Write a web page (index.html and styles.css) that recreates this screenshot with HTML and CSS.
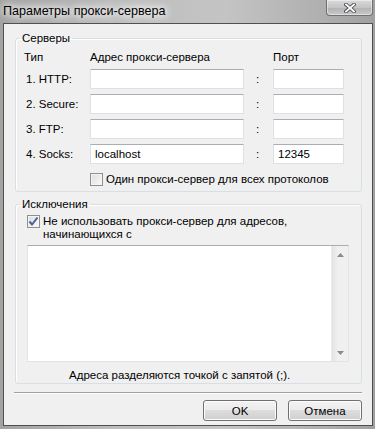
FILE: index.html
```html
<!DOCTYPE html>
<html lang="ru">
<head>
    <meta charset="UTF-8">
    <title>Параметры прокси-сервера</title>
    <link rel="stylesheet" href="styles.css">
</head>
<body>
    <div class="window">
        <div class="titlebar">
            <span class="title">Параметры прокси-сервера</span>
            <div class="close">
                <svg width="12" height="10" viewBox="0 0 12 10">
                    <path d="M2 1.5 L10 8.5 M10 1.5 L2 8.5" stroke="#4a4a56" stroke-width="3.6" stroke-linecap="square"/>
                    <path d="M2 1.5 L10 8.5 M10 1.5 L2 8.5" stroke="#fff" stroke-width="1.8" stroke-linecap="square"/>
                </svg>
            </div>
        </div>
        <div class="client">
            <fieldset class="group servers">
                <legend>Серверы</legend>
                <div class="group-body">
                    <div class="server-grid">
                        <span class="head">Тип</span>
                        <span class="head">Адрес прокси-сервера</span>
                        <span></span>
                        <span class="head">Порт</span>

                        <span class="row-label">1. HTTP:</span>
                        <div class="field"></div>
                        <span class="colon">:</span>
                        <div class="field"></div>

                        <span class="row-label">2. Secure:</span>
                        <div class="field"></div>
                        <span class="colon">:</span>
                        <div class="field"></div>

                        <span class="row-label">3. FTP:</span>
                        <div class="field"></div>
                        <span class="colon">:</span>
                        <div class="field"></div>

                        <span class="row-label">4. Socks:</span>
                        <div class="field">localhost</div>
                        <span class="colon">:</span>
                        <div class="field">12345</div>
                    </div>
                    <div class="check-row same-proxy">
                        <span class="checkbox"></span>
                        <span class="check-text">Один прокси-сервер для всех протоколов</span>
                    </div>
                </div>
            </fieldset>

            <fieldset class="group exceptions">
                <legend>Исключения</legend>
                <div class="group-body">
                    <div class="check-row">
                        <span class="checkbox">
                            <svg width="11" height="11" viewBox="0 0 11 11">
                                <path d="M1.5 5.5 L4 8.5 L9.5 1.5" fill="none" stroke="#4a5f97" stroke-width="2"/>
                            </svg>
                        </span>
                        <span class="check-text">Не использовать прокси-сервер для адресов,<br>начинающихся с</span>
                    </div>
                    <div class="textarea">
                        <div class="text-body"></div>
                        <div class="scrollbar">
                            <svg width="7" height="4" viewBox="0 0 7 4"><polygon points="0,4 3.5,0 7,4" fill="#8a8a8a"/></svg>
                            <svg width="7" height="4" viewBox="0 0 7 4"><polygon points="0,0 3.5,4 7,0" fill="#8a8a8a"/></svg>
                        </div>
                    </div>
                    <p class="hint">Адреса разделяются точкой с запятой (;).</p>
                </div>
            </fieldset>

            <div class="separator"></div>

            <div class="buttons">
                <button>OK</button>
                <button>Отмена</button>
            </div>
        </div>
    </div>
</body>
</html>
```

FILE: styles.css
```css
* {
    box-sizing: border-box;
}
body {
    margin: 0;
    background: #9c9c9c;
    font-family: "Liberation Sans", Arial, sans-serif;
    font-size: 11.5px;
    line-height: 13px;
    color: #000;
}
.window {
    width: 375px;
    height: 429px;
    display: flex;
    flex-direction: column;
    padding: 0 2px 3px 3px;
    background: linear-gradient(90deg, #a2a2a2, #bdbdbd 30%, #c4c4c4 60%, #b0b0b0 85%, #a0a0a0);
}
.titlebar {
    height: 23px;
    display: flex;
    justify-content: space-between;
    align-items: flex-start;
}
.title {
    padding-top: 4px;
    font-size: 12.6px;
    line-height: 15px;
    text-shadow: 0 0 6px #fff, 0 0 10px #fff, 0 0 12px #f4f4f4;
}
.close {
    width: 47px;
    height: 16px;
    border: 1px solid #707070;
    border-top: none;
    border-radius: 0 0 4px 4px;
    background: linear-gradient(#dadada, #c4c4c4 50%, #b2b2b2 52%, #c8c8c8);
    box-shadow: inset 0 0 0 1px rgba(255, 255, 255, 0.45);
    display: flex;
    align-items: center;
    justify-content: center;
}
.client {
    flex: 1;
    display: flex;
    flex-direction: column;
    background: #f0f0f0;
    border: 1px solid #505050;
    padding: 0 10px 0 11px;
}
.group {
    margin: 0;
    padding: 0;
    min-width: 0;
    border: 1px solid #d5dfe5;
    border-radius: 3px;
    box-shadow: inset 1px 1px 0 #fff;
}
.group legend {
    margin-left: 4px;
    padding: 0 2px;
    line-height: 13px;
}
.servers {
    margin-top: 8px;
}
.servers .group-body {
    padding: 6px 8px 5px 8px;
}
.server-grid {
    display: grid;
    grid-template-columns: 66px 154px 29px 71px;
    grid-template-rows: 13px repeat(4, 20px);
    row-gap: 5px;
    align-items: center;
}
.row-label {
    padding-left: 2px;
}
.field {
    height: 20px;
    background: #fff;
    border: 1px solid #dde1e7;
    border-top-color: #abadb3;
    padding: 3px 0 0 4px;
}
.colon {
    padding-left: 12px;
}
.check-row {
    display: flex;
    align-items: flex-start;
}
.same-proxy {
    margin: 9px -8px 0 66px;
    white-space: nowrap;
    overflow: hidden;
}
.checkbox {
    width: 13px;
    height: 13px;
    flex-shrink: 0;
    border: 1px solid #8e8f8f;
    background: linear-gradient(135deg, #dcdcdc, #fafafa);
    box-shadow: inset 0 0 0 1px #f4f4f4;
    display: flex;
    align-items: center;
    justify-content: center;
}
.check-text {
    margin-left: 3px;
}
.exceptions {
    margin-top: 6px;
}
.exceptions .group-body {
    padding: 4px 12px 1px 11px;
}
.textarea {
    margin-top: 4px;
    height: 117px;
    display: flex;
    background: #fff;
    border: 1px solid #e2e3ea;
    border-top-color: #abadb3;
}
.text-body {
    flex: 1;
}
.scrollbar {
    width: 17px;
    display: flex;
    flex-direction: column;
    justify-content: space-between;
    align-items: center;
    padding: 7px 0 6px;
    background: linear-gradient(90deg, #e4e4e4, #f0f0f0 40%, #f0f0f0);
    border-left: 1px solid #eaeaea;
}
.hint {
    margin: 7px 0 0;
    padding-left: 42px;
}
.separator {
    margin: 8px 0 0 -1px;
    border-top: 1px solid #a0a0a0;
    border-bottom: 1px solid #fff;
}
.buttons {
    display: flex;
    justify-content: flex-end;
    gap: 11px;
    margin-top: 6px;
}
.buttons button {
    width: 74px;
    height: 21px;
    font-family: inherit;
    font-size: 11.5px;
    color: #000;
    border: 1px solid #707070;
    border-radius: 3px;
    background: linear-gradient(#f2f2f2, #ebebeb 49%, #dddddd 50%, #cfcfcf);
    box-shadow: inset 0 0 0 1px #fcfcfc;
    padding: 0;
}
```
